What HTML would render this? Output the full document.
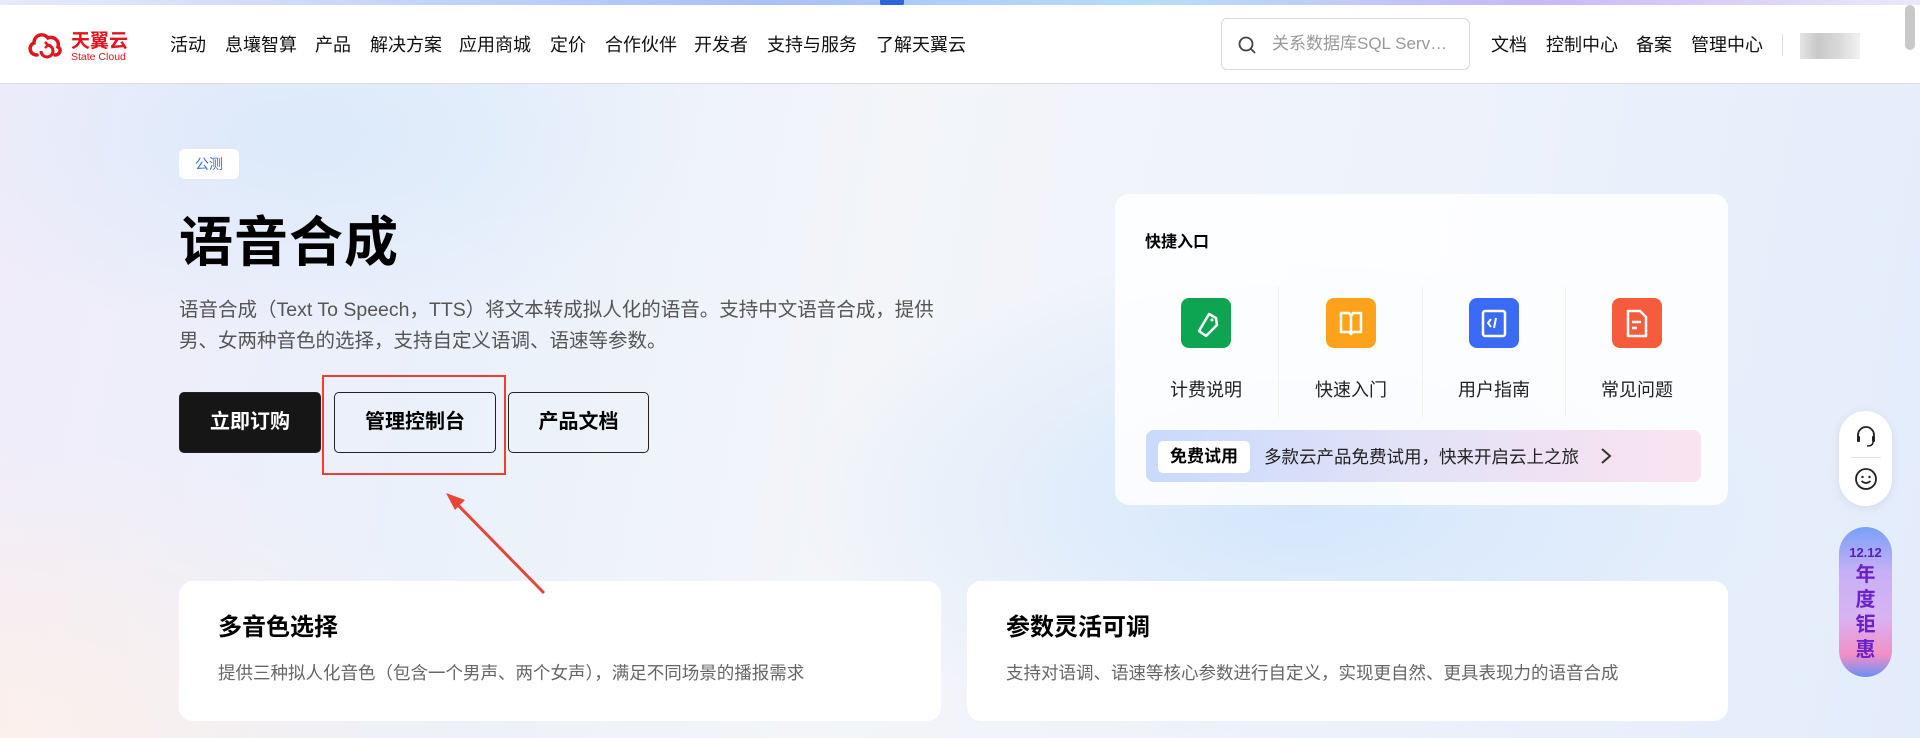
<!DOCTYPE html>
<html><head><meta charset="utf-8">
<style>
*{margin:0;padding:0;box-sizing:border-box}
body{width:1920px;height:738px;overflow:hidden;position:relative;font-family:"Liberation Sans","Noto Sans CJK SC",sans-serif;color:#000;
background:linear-gradient(100deg,#f1ecfa 0%,#eaf1fb 25%,#f3f5f9 45%,#eef3fb 70%,#e3ecfb 100%);}
.bg2{position:absolute;left:0;top:84px;width:1920px;height:654px;background:radial-gradient(ellipse 500px 300px at 0% 100%,rgba(255,240,230,.8),transparent),radial-gradient(ellipse 500px 250px at 1300px 420px,rgba(200,225,252,.7),transparent),radial-gradient(ellipse 400px 200px at 300px 50px,rgba(215,232,250,.8),transparent)}
.topbar{position:absolute;left:0;top:0;width:1920px;height:5px;background:linear-gradient(90deg,#e6eafa,#a8c0f8 40%,#b9dcf8 60%,#c7b8f6 80%,#ece8fa)}
.header{position:absolute;left:0;top:5px;width:1920px;height:79px;background:#fff;border-bottom:1px solid #dcdcdc}
.nav{position:absolute;top:44px;transform:translateY(-50%);font-size:18px;color:#111;white-space:nowrap}
.logo{position:absolute;left:27px;top:29px}
.search{position:absolute;left:1221px;top:18px;width:249px;height:52px;border:1px solid #d9d9d9;border-radius:6px;background:#fff;font-size:17px;color:#999;line-height:50px;padding-left:50px}
.tag{position:absolute;left:179px;top:149px;width:60px;height:30px;background:#fff;border-radius:6px;color:#3a6cf0;font-size:14px;text-align:center;line-height:30px}
h1{position:absolute;left:179px;top:198px;font-size:54px;font-weight:bold;letter-spacing:1px}
.desc{position:absolute;left:179px;top:295px;width:790px;font-size:19.5px;line-height:31px;color:#555}
.btn{position:absolute;top:392px;height:61px;border:1px solid #222;border-radius:5px;font-size:20px;font-weight:bold;text-align:center;line-height:59px}
.card{position:absolute;background:#fff;border-radius:14px}
.qi{position:absolute;width:50px;height:50px;border-radius:8px;top:298px}
.ql{position:absolute;top:376px;font-size:18px;color:#222;width:100px;text-align:center}
.dv{position:absolute;top:287px;width:1px;height:130px;background:#eceef2}
.ft h3{position:absolute;left:39px;top:26px;font-size:24px;font-weight:bold}
.ft p{position:absolute;left:39px;top:79px;font-size:17.5px;color:#666}
</style></head><body>
<div class="bg2"></div>
<div class="topbar"></div>
<div style="position:absolute;left:880px;top:0;width:24px;height:6px;background:#2d66d8;border-radius:0 0 3px 3px"></div>
<div class="header"></div>
<div class="logo">
<svg width="112" height="32" viewBox="0 0 112 32"><path d="M10 26 C2 26 1 16 7 14 C7 6 16 3 21 9 C26 7 33 11 31 18 C35 20 33 26 28 26" fill="none" stroke="#e0141e" stroke-width="3.5" stroke-linecap="round"/><path d="M14 22 a6 6 0 1 0 6 -6" fill="none" stroke="#e0141e" stroke-width="3"/><path d="M18 13 l3 3 -3 3" fill="none" stroke="#e0141e" stroke-width="2.5"/>
<text x="44" y="18" font-size="19" font-weight="bold" fill="#e0141e" font-family="Noto Sans CJK SC,sans-serif">天翼云</text>
<text x="44" y="31" font-size="10.5" fill="#e0141e" font-family="Liberation Sans,sans-serif">State Cloud</text></svg></div>
<div class="nav" style="left:170px">活动</div>
<div class="nav" style="left:225px">息壤智算</div>
<div class="nav" style="left:315px">产品</div>
<div class="nav" style="left:370px">解决方案</div>
<div class="nav" style="left:459px">应用商城</div>
<div class="nav" style="left:550px">定价</div>
<div class="nav" style="left:605px">合作伙伴</div>
<div class="nav" style="left:694px">开发者</div>
<div class="nav" style="left:767px">支持与服务</div>
<div class="nav" style="left:876px">了解天翼云</div>
<div class="search">关系数据库SQL Serv…<svg style="position:absolute;left:15px;top:16px" width="20" height="20" viewBox="0 0 20 20"><circle cx="9" cy="9" r="6.5" fill="none" stroke="#444" stroke-width="1.8"/><path d="M14 14 l4 4" stroke="#444" stroke-width="1.8"/></svg></div>
<div class="nav" style="left:1491px">文档</div>
<div class="nav" style="left:1546px">控制中心</div>
<div class="nav" style="left:1636px">备案</div>
<div class="nav" style="left:1691px">管理中心</div>
<div style="position:absolute;left:1782px;top:34px;width:1px;height:22px;background:#ddd"></div>
<div style="position:absolute;left:1800px;top:33px;width:60px;height:26px;background:linear-gradient(90deg,#ddd,#bbb 30%,#ccc 60%,#eee);opacity:.8"></div>
<div style="position:absolute;left:1905px;top:5px;width:10px;height:45px;background:#c9c9c9;border-radius:5px"></div>

<div class="tag">公测</div>
<h1>语音合成</h1>
<div class="desc">语音合成（Text To Speech，TTS）将文本转成拟人化的语音。支持中文语音合成，提供男、女两种音色的选择，支持自定义语调、语速等参数。</div>
<div class="btn" style="left:179px;width:142px;background:#161616;color:#fff">立即订购</div>
<div class="btn" style="left:334px;width:162px">管理控制台</div>
<div class="btn" style="left:508px;width:141px">产品文档</div>
<div style="position:absolute;left:322px;top:375px;width:184px;height:100px;border:2.5px solid #ef3f33"></div>

<div class="card" style="left:1115px;top:194px;width:613px;height:311px;background:rgba(255,255,255,.85)"></div>
<div style="position:absolute;left:1145px;top:228px;font-size:16px;font-weight:bold">快捷入口</div>
<div class="qi" style="left:1181px;background:#0ea552"><svg width="50" height="50"><path d="M18 33 L28 16 L35 20 L36 27 L25 38 Z" fill="none" stroke="#fff" stroke-width="2.5" stroke-linejoin="round"/><circle cx="31" cy="22" r="1.5" fill="#fff"/></svg></div>
<div class="qi" style="left:1326px;background:#ffa21b"><svg width="50" height="50"><path d="M15 15 h8 l2 3 l2 -3 h8 v19 h-8 l-2 2 l-2 -2 h-8 Z M25 18 v16" fill="none" stroke="#fff" stroke-width="2.5" stroke-linejoin="round"/></svg></div>
<div class="qi" style="left:1469px;background:#3b6af5"><svg width="50" height="50"><rect x="14" y="13" width="22" height="25" rx="2" fill="none" stroke="#fff" stroke-width="2.5"/><path d="M22 21 l-3 4 3 4 M27 20 l-2 10" fill="none" stroke="#fff" stroke-width="2"/></svg></div>
<div class="qi" style="left:1612px;background:#f55b3c"><svg width="50" height="50"><path d="M16 13 h12 l6 6 v19 h-18 Z" fill="none" stroke="#fff" stroke-width="2.5" stroke-linejoin="round"/><path d="M20 24 h9 M20 30 h5" stroke="#fff" stroke-width="2.5"/></svg></div>
<div class="ql" style="left:1156px">计费说明</div>
<div class="ql" style="left:1301px">快速入门</div>
<div class="ql" style="left:1444px">用户指南</div>
<div class="ql" style="left:1587px">常见问题</div>
<div class="dv" style="left:1278px"></div><div class="dv" style="left:1422px"></div><div class="dv" style="left:1565px"></div>
<div style="position:absolute;left:1146px;top:430px;width:555px;height:52px;border-radius:8px;background:linear-gradient(90deg,#c9dafc,#e4e2f7 50%,#fbe3f0)"></div>
<div style="position:absolute;left:1158px;top:441px;width:92px;height:32px;background:#fff;border-radius:5px;font-size:17px;font-weight:bold;text-align:center;line-height:32px">免费试用</div>
<div style="position:absolute;left:1264px;top:444px;font-size:17.5px;color:#222">多款云产品免费试用，快来开启云上之旅</div>
<svg style="position:absolute;left:1598px;top:446px" width="16" height="20"><path d="M4 3 l8 7 -8 7" fill="none" stroke="#333" stroke-width="2"/></svg>

<div class="card ft" style="left:179px;top:581px;width:762px;height:140px"><h3>多音色选择</h3><p>提供三种拟人化音色（包含一个男声、两个女声），满足不同场景的播报需求</p></div>
<div class="card ft" style="left:967px;top:581px;width:761px;height:140px"><h3>参数灵活可调</h3><p>支持对语调、语速等核心参数进行自定义，实现更自然、更具表现力的语音合成</p></div>
<svg style="position:absolute;left:0;top:0" width="1920" height="738"><path d="M544 593 L453 500" stroke="#e8453a" stroke-width="3"/><path d="M446 493 L465 500 L455 510 Z" fill="#e8453a"/></svg>

<div style="position:absolute;left:1839px;top:411px;width:53px;height:95px;background:#fff;border-radius:27px;box-shadow:0 2px 10px rgba(0,0,0,.08)"></div>
<svg style="position:absolute;left:1853px;top:423px" width="26" height="26"><path d="M5 15 v-3 a8 8 0 0 1 16 0 v3" fill="none" stroke="#222" stroke-width="1.8"/><rect x="4" y="13" width="3" height="6" rx="1" fill="#222"/><rect x="19" y="13" width="3" height="6" rx="1" fill="#222"/><path d="M20 19 q0 4 -6 4" fill="none" stroke="#222" stroke-width="1.5"/></svg>
<div style="position:absolute;left:1851px;top:457px;width:30px;height:1px;background:#e5e5e5"></div>
<svg style="position:absolute;left:1853px;top:466px" width="26" height="26"><circle cx="13" cy="13" r="10" fill="none" stroke="#222" stroke-width="1.8"/><circle cx="9.5" cy="11" r="1.2" fill="#222"/><circle cx="16.5" cy="11" r="1.2" fill="#222"/><path d="M8.5 15 q4.5 4 9 0" fill="none" stroke="#222" stroke-width="1.6"/></svg>
<div style="position:absolute;left:1839px;top:527px;width:53px;height:150px;border-radius:27px;background:linear-gradient(180deg,#7aa0f7,#c7b0f6 30%,#d8b3f4 60%,#f28fc6 85%,#6a8ff5)"></div>
<div style="position:absolute;left:1839px;top:545px;width:53px;text-align:center;color:#5a1fb0;font-weight:bold;font-size:13px">12.12</div>
<div style="position:absolute;left:1839px;top:563px;width:53px;text-align:center;color:#6a22c8;font-weight:bold;font-size:20px;line-height:25px">年<br>度<br>钜<br>惠</div>
</body></html>
